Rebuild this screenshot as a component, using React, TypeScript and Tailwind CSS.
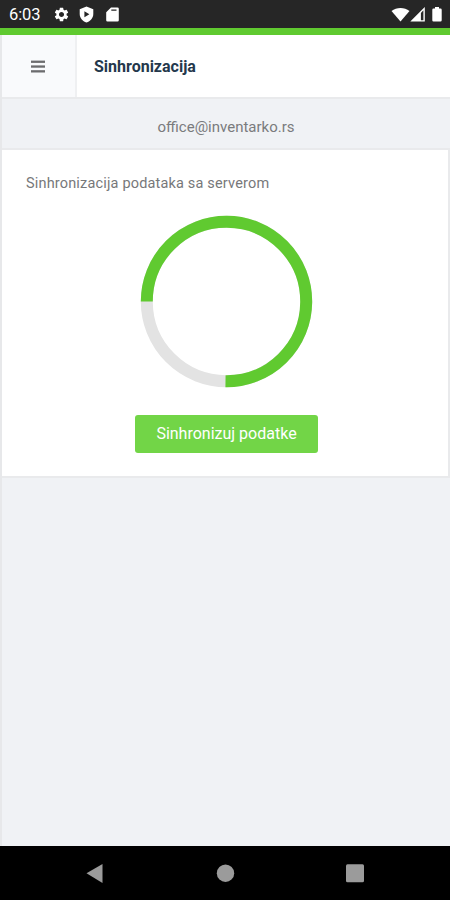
import { MdSettings } from "react-icons/md";

const StatusBar = () => {
  return (
    <div className="flex h-7 items-center justify-between bg-[#262626] pt-px pr-2 pl-[9px] text-white">
      <div className="flex items-center">
        <span className="w-[44px] pt-[2px] text-[16.5px] leading-none tracking-[-0.1px]">
          6:03
        </span>
        <MdSettings className="h-[17px] w-[17px]" />
        <svg
          className="ml-[9px] h-[17px] w-[15px]"
          viewBox="0 0 15 17"
          fill="currentColor"
        >
          <path
            fillRule="evenodd"
            d="M7.500 .6 14.300 3.200v4.800c0 4-2.800 7.100-6.800 8.600C3.500 15.100.7 12 .7 8V3.200ZM5.400 5.200v6l5-3Z"
          />
        </svg>
        <svg
          className="ml-[12px] h-[15px] w-[13px]"
          viewBox="0 0 13 15"
          fill="currentColor"
        >
          <path
            fillRule="evenodd"
            d="M5 .5h6.500a1.300 1.300 0 0 1 1.300 1.300v11.400a1.300 1.300 0 0 1-1.300 1.300h-10a1.300 1.300 0 0 1-1.300-1.300V5.300ZM5.300 2.600v1.200h5.200V2.600Z"
          />
        </svg>
      </div>

      <div className="flex items-center">
        <svg
          className="h-[15px] w-[19px]"
          viewBox="0 0 19 15"
          fill="currentColor"
        >
          <path d="M.5 4C5.500-.1 13.500-.1 18.500 4l-9 10.500Z" />
        </svg>
        <svg
          className="h-[15px] w-[16px]"
          viewBox="0 0 16 15"
          fill="currentColor"
        >
          <path
            fillRule="evenodd"
            d="M14.800 0v14.500H.3ZM13.400 3.300l-2.500 2.600v7.300h2.500Z"
          />
        </svg>
        <svg
          className="ml-[6px] h-[15px] w-[10px]"
          viewBox="0 0 10 15"
          fill="currentColor"
        >
          <path d="M3 0h4v1.500h1.500A1.200 1.200 0 0 1 9.700 2.700v10.600a1.200 1.200 0 0 1-1.200 1.200h-7A1.200 1.200 0 0 1 .3 13.300V2.700a1.200 1.200 0 0 1 1.200-1.200H3Z" />
        </svg>
      </div>
    </div>
  );
};

const Header = () => {
  return (
    <header className="flex h-[64px] border-b-2 border-[#e9eaec] bg-white">
      <button className="flex w-[75px] items-center justify-center border-r-2 border-[#eff0f2] bg-[#f9fafc]">
        <svg
          className="mt-px mr-px h-[14px] w-[14px]"
          viewBox="0 0 14 14"
          fill="#6c6c6e"
        >
          <rect y=".6" width="14" height="2.300" />
          <rect y="5.400" width="14" height="2.300" />
          <rect y="10.200" width="14" height="2.300" />
        </svg>
      </button>
      <h1 className="flex items-center pt-px pl-[17px] text-[16px] font-bold text-[#24384c]">
        Sinhronizacija
      </h1>
    </header>
  );
};

const ProgressRing = () => {
  return (
    <svg
      className="h-[173px] w-[173px]"
      viewBox="0 0 173 173"
      fill="none"
      strokeWidth="12"
    >
      <circle cx="86.500" cy="86.500" r="79.700" stroke="#e3e3e3" />
      <path
        d="M6.800 86.500A79.700 79.700 0 1 1 85.500 166.200"
        stroke="#60ca30"
      />
    </svg>
  );
};

const NavigationBar = () => {
  return (
    <nav className="h-[54px] bg-black">
      <svg className="h-[54px] w-full" viewBox="0 0 450 54" fill="#9b9b9b">
        <path d="M86.500 27.300 102.500 18v19Z" />
        <circle cx="225.500" cy="27.200" r="8.700" />
        <rect x="346" y="18.300" width="18" height="18" rx="1.500" />
      </svg>
    </nav>
  );
};

const App = () => {
  return (
    <div className="flex h-[900px] w-[450px] flex-col overflow-hidden bg-[#f0f2f5] font-['Roboto',sans-serif]">
      <StatusBar />
      <div className="h-[7px] bg-[#60ca30]" />

      <main className="flex flex-1 flex-col border-l-2 border-[#e7e8ea]">
        <Header />
        <p className="h-[49px] pt-[18px] text-center text-[15px] leading-[20px] text-[#7a7b7d]">
          office@inventarko.rs
        </p>

        <section className="flex h-[330px] flex-col items-center border-y-2 border-r-2 border-[#e9eaec] bg-white">
          <p className="w-full pt-[24px] pl-6 text-[14.5px] leading-[20px] tracking-[0.17px] text-[#77787a]">
            Sinhronizacija podataka sa serverom
          </p>
          <div className="mt-[21px] ml-[2px]">
            <ProgressRing />
          </div>
          <button className="mt-[27px] ml-[3px] h-[38px] w-[183px] rounded-[3px] bg-[#72d547] text-[16px] text-white">
            Sinhronizuj podatke
          </button>
        </section>
      </main>

      <NavigationBar />
    </div>
  );
};

export default App;
